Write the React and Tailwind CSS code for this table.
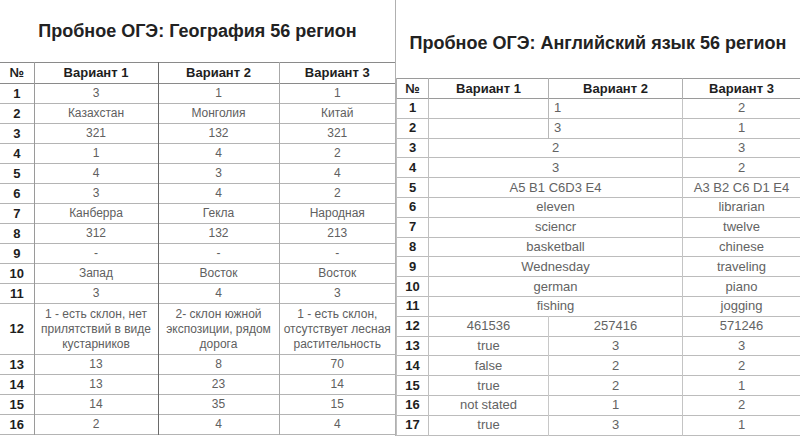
import React from "react";

const geo = [
  ["1", "3", "1", "1"],
  ["2", "Казахстан", "Монголия", "Китай"],
  ["3", "321", "132", "321"],
  ["4", "1", "4", "2"],
  ["5", "4", "3", "4"],
  ["6", "3", "4", "2"],
  ["7", "Канберра", "Гекла", "Народная"],
  ["8", "312", "132", "213"],
  ["9", "-", "-", "-"],
  ["10", "Запад", "Восток", "Восток"],
  ["11", "3", "4", "3"],
  [
    "12",
    "1 - есть склон, нет прилятствий в виде кустарников",
    "2- склон южной экспозиции, рядом дорога",
    "1 - есть склон, отсутствует лесная растительность",
  ],
  ["13", "13", "8", "70"],
  ["14", "13", "23", "14"],
  ["15", "14", "35", "15"],
  ["16", "2", "4", "4"],
];

const eng = [
  { n: "1", split: true, a: "", b: "1", c: "2" },
  { n: "2", split: true, a: "", b: "3", c: "1" },
  { n: "3", m: "2", c: "3" },
  { n: "4", m: "3", c: "2" },
  { n: "5", m: "A5 B1 C6D3 E4", c: "A3 B2 C6 D1 E4" },
  { n: "6", m: "eleven", c: "librarian" },
  { n: "7", m: "sciencr", c: "twelve" },
  { n: "8", m: "basketball", c: "chinese" },
  { n: "9", m: "Wednesday", c: "traveling" },
  { n: "10", m: "german", c: "piano" },
  { n: "11", m: "fishing", c: "jogging" },
  { n: "12", a: "461536", b: "257416", c: "571246" },
  { n: "13", a: "true", b: "3", c: "3" },
  { n: "14", a: "false", b: "2", c: "2" },
  { n: "15", a: "true", b: "2", c: "1" },
  { n: "16", a: "not stated", b: "1", c: "2" },
  { n: "17", a: "true", b: "3", c: "1" },
];

const font = { fontFamily: '"Liberation Sans", Arial, sans-serif' };

function GeoTable() {
  const head = "p-0 text-[13px] leading-[16px] font-bold text-[#1e1e1e]";
  const body = "px-1 py-0 text-center text-[12px] leading-[15px] text-[#606060]";
  return (
    <table className="w-full shrink-0 table-fixed border-collapse">
      <colgroup>
        <col className="w-[34px]" />
        <col className="w-[124px]" />
        <col className="w-[121px]" />
        <col />
      </colgroup>
      <thead>
        <tr className="h-[21px] border-y border-[#8a8a8a]">
          <th className={`border-r border-[#9a9a9a] ${head}`}>№</th>
          <th className={`border-r border-[#6a6a6a] ${head}`}>Вариант 1</th>
          <th className={`border-r border-[#a8a8a8] ${head}`}>Вариант 2</th>
          <th className={head}>Вариант 3</th>
        </tr>
      </thead>
      <tbody>
        {geo.map((r) => {
          const tall = r[0] === "12";
          return (
            <tr
              key={r[0]}
              className={`${tall ? "h-[51px]" : "h-[20px]"} border-b border-[#b4b4b4]`}
            >
              <td className={`border-r border-[#9a9a9a] text-center ${head}`}>{r[0]}</td>
              <td className={`border-r border-[#6a6a6a] ${body}`}>{r[1]}</td>
              <td className={`border-r border-[#a8a8a8] ${body}`}>{r[2]}</td>
              <td className={body}>{r[3]}</td>
            </tr>
          );
        })}
      </tbody>
    </table>
  );
}

function EngTable() {
  const head = "p-0 text-[13px] leading-[16px] font-bold text-[#1e1e1e]";
  const body = "p-0 text-center text-[13px] leading-[16px] text-[#636363]";
  return (
    <table className="w-full shrink-0 table-fixed border-collapse">
      <colgroup>
        <col className="w-[32px]" />
        <col className="w-[120px]" />
        <col className="w-[134px]" />
        <col />
      </colgroup>
      <thead>
        <tr className="h-[20px] border-y border-[#9a9a9a]">
          <th className={`border-x border-[#b0b0b0] ${head}`}>№</th>
          <th className={`border-r border-[#b0b0b0] ${head}`}>Вариант 1</th>
          <th className={`border-r border-[#b0b0b0] ${head}`}>Вариант 2</th>
          <th className={head}>Вариант 3</th>
        </tr>
      </thead>
      <tbody>
        {eng.map((r) => (
          <tr key={r.n} className="h-[19.8px] border-b border-[#bcbcbc]">
            <td className={`border-x border-[#c0c0c0] text-center ${head}`}>{r.n}</td>
            {r.split ? (
              <>
                <td className="border-r border-[#b8b8b8] p-0"></td>
                <td className="border-r border-[#c4c4c4] py-0 pl-[5px] text-left text-[13px] leading-[16px] text-[#636363]">
                  {r.b}
                </td>
              </>
            ) : r.m !== undefined ? (
              <td colSpan={2} className={`border-r border-[#c4c4c4] ${body}`}>
                {r.m}
              </td>
            ) : (
              <>
                <td className={`border-r border-[#c8c8c8] ${body}`}>{r.a}</td>
                <td className={`border-r border-[#c4c4c4] ${body}`}>{r.b}</td>
              </>
            )}
            <td className={body}>{r.c}</td>
          </tr>
        ))}
      </tbody>
    </table>
  );
}

export default function App() {
  return (
    <div className="flex h-[436px] w-[800px] overflow-hidden bg-white" style={font}>
      <div className="flex w-[396px] shrink-0 flex-col border-r border-[#b0b0b0]">
        <div className="flex h-[62px] shrink-0 items-center justify-center text-[18px] font-bold text-[#222]">
          Пробное ОГЭ: География 56 регион
        </div>
        <GeoTable />
      </div>
      <div className="flex w-[404px] shrink-0 flex-col">
        <div className="flex h-[78px] shrink-0 items-center justify-center pt-[8px] text-[18px] font-bold text-[#222]">
          Пробное ОГЭ: Английский язык 56 регион
        </div>
        <EngTable />
      </div>
    </div>
  );
}
